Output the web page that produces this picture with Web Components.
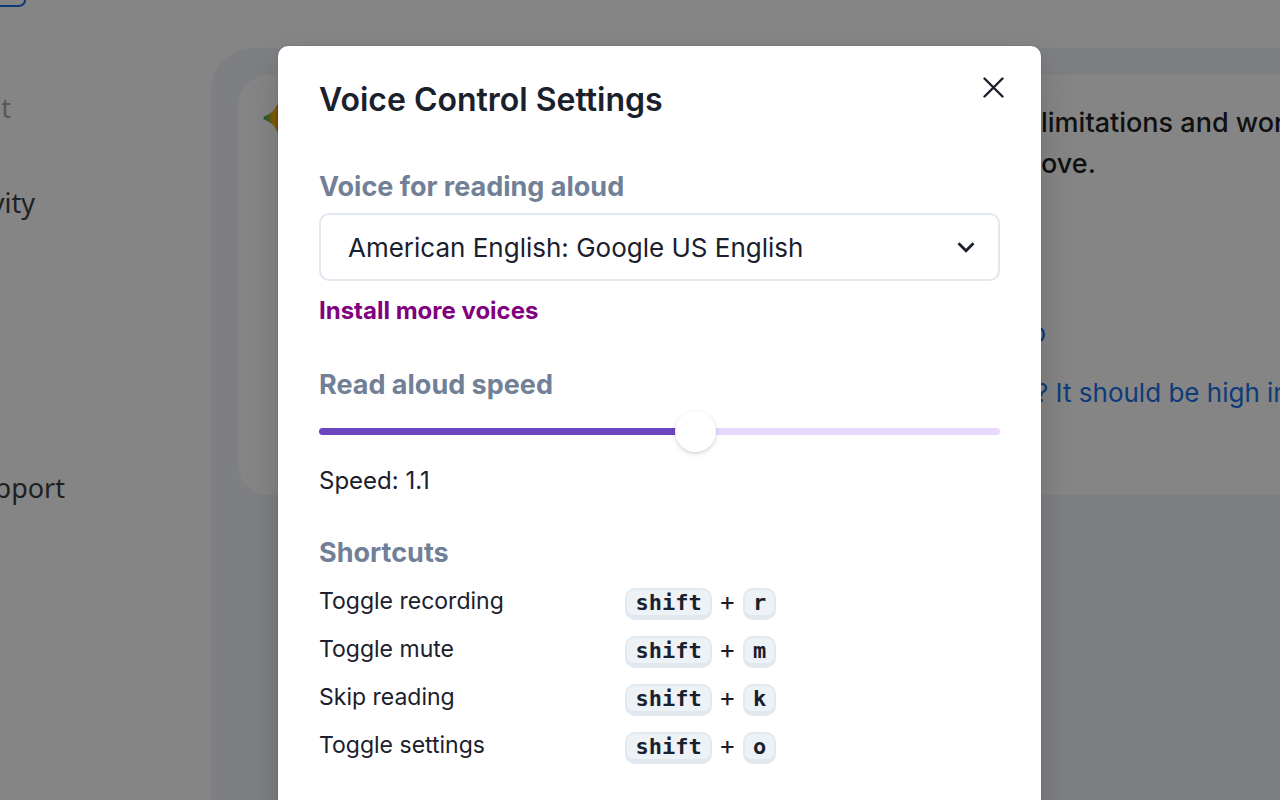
<!DOCTYPE html>
<html lang="en">
<head>
<meta charset="utf-8">
<title>Voice Control Settings</title>
<style>
  html, body { margin: 0; height: 100%; overflow: hidden; }
  body { background: #fff; font-family: Inter, sans-serif; color: #1a202c; }
</style>
</head>
<body>
<voice-app></voice-app>
<script>
const define = (name, html, setup) => {
  const template = document.createElement('template');
  template.innerHTML = '<style>*{box-sizing:border-box}[hidden]{display:none}</style>' + html;
  customElements.define(name, class extends HTMLElement {
    constructor() {
      super();
      this.attachShadow({ mode: 'open' }).append(template.content.cloneNode(true));
      if (setup) setup(this.shadowRoot);
    }
  });
};

define('side-nav', `
  <style>
    :host { display: block; overflow: hidden; color: #3c4043; font: 27px/36px "Noto Sans", sans-serif; }
    button { display: block; width: 26px; height: 7px; padding: 0; background: none;
      border: 2px solid #1a73e8; border-width: 0 2px 2px 0; border-radius: 0 0 9px 0; }
    nav { display: grid; grid-auto-rows: 95px; margin-top: 53px; justify-items: start; align-items: center; }
    a { color: inherit; text-decoration: none; display: flex; justify-content: flex-end; }
    .t { width: 11px; color: #aaa; }
    .activity { width: 35px; }
    .support { width: 65px; grid-row: 5; }
  </style>
  <button aria-label="New"></button>
  <nav>
    <a class="t" href="#">t</a>
    <a class="activity" href="#">vity</a>
    <a class="support" href="#">pport</a>
  </nav>`);

define('answer-card', `
  <style>
    :host { display: flex; align-items: flex-start; min-height: 420px; padding: 27px 0 0 25px;
      background: #fff; border-radius: 30px 0 0 30px; overflow: hidden; white-space: nowrap; }
    svg { flex: none; width: 32px; height: 32px; }
    .copy { margin-left: 746px; font: 500 27px/41px Inter, sans-serif; color: #1f1f1f; }
    p { margin: 0; }
    ul { list-style: none; margin: 0; padding: 0; margin-top: 119px; font-size: 26px; font-weight: 400; line-height: 60px; }
    li { display: flex; }
    a { color: #1a73e8; text-decoration: none; }
    .end { width: 5px; display: flex; justify-content: flex-end; }
    .more { margin-left: -6px; }
  </style>
  <svg viewBox="0 0 32 32" aria-hidden="true">
    <defs><linearGradient id="g"><stop offset="0" stop-color="#34a87c"/><stop offset=".2" stop-color="#a5a82c"/><stop offset=".34" stop-color="#fbbc04"/><stop offset=".5" stop-color="#ea6a23"/><stop offset="1" stop-color="#4285f4"/></linearGradient></defs>
    <path fill="url(#g)" d="M1 14.500C8 12 12 8 15 1q1-2 2 0c3 7 7 11 14 13.500q2 1.500 0 3c-7 2.500-11 6.500-14 13.500q-1 2-2 0C12 24 8 20 1 17.500q-1-1.500 0-3z"/>
  </svg>
  <div class="copy">
    <p>limitations and wor</p>
    <p>ove.</p>
    <ul>
      <li><a class="end" href="#">o</a></li>
      <li><a class="more" href="#">? It should be high in</a></li>
    </ul>
  </div>`);

define('key-cap', `
  <style>
    :host { display: inline-block; }
    kbd { display: block; padding: 0 8px; border: 2px solid #e2e8f0; border-bottom-width: 5px;
      border-radius: 10px; background: #edf2f7; font: bold 22px/25px "DejaVu Sans Mono", monospace; }
  </style>
  <kbd><slot></slot></kbd>`);

define('shortcut-row', `
  <style>
    :host { display: grid; grid-template-columns: 45% 1fr; height: 48px; font-size: 23px; line-height: 48px; }
    .keys { display: flex; align-items: flex-start; gap: 7px; padding-top: 11px; }
    .plus { font-size: 26px; line-height: 26px; }
  </style>
  <span><slot></slot></span>
  <span class="keys"><key-cap>shift</key-cap><span class="plus">+</span><key-cap><slot name="key"></slot></key-cap></span>`);

define('voice-select', `
  <style>
    :host { display: block; }
    label { display: block; font: 700 27px/36px Inter, sans-serif; color: #718096; }
    .field { position: relative; margin-top: 8px; }
    select { appearance: none; display: block; width: 100%; height: 68px; padding: 0 60px 0 27px; margin: 0;
      border: 2px solid #e2e8f0; border-radius: 10px; background: #fff; color: inherit; font: 400 26px Inter, sans-serif; }
    svg { position: absolute; right: 17px; top: 17px; width: 34px; height: 34px; pointer-events: none; }
  </style>
  <label for="voice">Voice for reading aloud</label>
  <div class="field">
    <select id="voice"><option>American English: Google US English</option></select>
    <svg viewBox="0 0 24 24" aria-hidden="true"><path fill="currentColor" d="M16.59 8.59 12 13.17 7.41 8.59 6 10l6 6 6-6z"/></svg>
  </div>`);

define('speed-slider', `
  <style>
    :host { display: block; --fill: 55%; }
    label { display: block; font: 700 27px/36px Inter, sans-serif; color: #718096; }
    input { appearance: none; display: block; width: 100%; height: 41px; margin: 8px 0 0; background: none; }
    input::-webkit-slider-runnable-track { height: 7px; border-radius: 4px;
      background: linear-gradient(to right, #6b46c1 var(--fill), #e9d8fd var(--fill)); }
    input::-webkit-slider-thumb { appearance: none; width: 41px; height: 41px; margin-top: -17px; border-radius: 50%;
      background: #fff; box-shadow: 0 2px 5px rgba(0,0,0,.12), 0 1px 3px rgba(0,0,0,.08); }
    output { display: block; margin-top: 11px; }
  </style>
  <label for="speed">Read aloud speed</label>
  <input id="speed" type="range" min="0.1" max="1.9" step="0.1" value="1.1">
  <output for="speed">Speed: 1.1</output>`,
  root => {
    const input = root.querySelector('input');
    input.addEventListener('input', () => {
      input.style.setProperty('--fill', (input.value - input.min) / (input.max - input.min) * 100 + '%');
      root.querySelector('output').textContent = 'Speed: ' + input.value;
    });
  });

define('settings-dialog', `
  <style>
    :host { display: block; position: relative; padding: 32px 41px 60px; border-radius: 10px; background: #fff;
      font: 400 24px/36px Inter, sans-serif; color: #1a202c;
      box-shadow: 0 0 0 1px rgba(0,0,0,.05), 0 16px 34px rgba(0,0,0,.16); }
    h2 { margin: 0 0 47px; font-size: 32px; line-height: 44px; font-weight: 600; }
    h3 { margin: 36px 0 6px; font-size: 27px; line-height: 36px; font-weight: 700; color: #718096; }
    .close { position: absolute; top: 14px; right: 21px; width: 54px; height: 54px; padding: 0; border: 0;
      display: grid; place-items: center; background: none; color: inherit; }
    .close svg { width: 21px; height: 21px; }
    a { display: block; width: max-content; margin: 12px 0 38px; font-weight: 700; color: purple; text-decoration: none; }
  </style>
  <section role="dialog" aria-labelledby="title">
    <h2 id="title">Voice Control Settings</h2>
    <button class="close" aria-label="Close"><svg viewBox="0 0 21 21"><path d="M1.500 1.500l18 18M19.500 1.500L1.500 19.500" fill="none" stroke="currentColor" stroke-width="2.400" stroke-linecap="round"/></svg></button>
    <voice-select></voice-select>
    <a href="#">Install more voices</a>
    <speed-slider></speed-slider>
    <h3>Shortcuts</h3>
    <shortcut-row>Toggle recording<span slot="key">r</span></shortcut-row>
    <shortcut-row>Toggle mute<span slot="key">m</span></shortcut-row>
    <shortcut-row>Skip reading<span slot="key">k</span></shortcut-row>
    <shortcut-row>Toggle settings<span slot="key">o</span></shortcut-row>
  </section>`);

define('voice-app', `
  <style>
    :host { display: block; position: relative; height: 100%; overflow: hidden; }
    .page { display: grid; grid-template-columns: 211px minmax(0, 1fr); height: 100%; }
    main { margin-top: 48px; padding: 27px 0 0 27px; background: #f0f4fc; border-radius: 42px 0 0 0; }
    .overlay { position: absolute; inset: 0; padding: 46px 0 0 39px; background: rgba(0,0,0,.48); overflow: hidden; }
    settings-dialog { width: min(763px, 100%); margin: 0 auto; }
  </style>
  <div class="page">
    <side-nav></side-nav>
    <main><answer-card></answer-card></main>
  </div>
  <div class="overlay"><settings-dialog></settings-dialog></div>`);
</script>
</body>
</html>
